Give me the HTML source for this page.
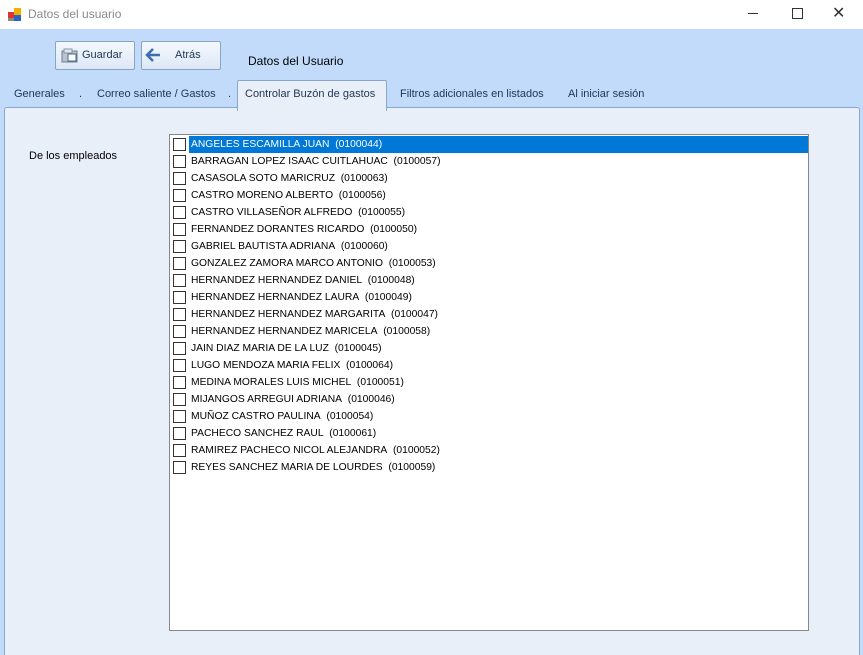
<!DOCTYPE html>
<html style="overflow:hidden"><head><meta charset="utf-8"><style>
html,body{overflow:hidden}
body{margin:0;width:863px;height:655px;overflow:hidden;background:#c2dbfb;font-family:"Liberation Sans",sans-serif;font-size:11px;position:relative}
.tb{position:absolute;left:0;top:0;width:863px;height:29px;background:#fff}
.tb .t{position:absolute;left:28px;top:7px;font-size:12px;color:#8a8a8a}
.btn{position:absolute;top:41px;height:27px;border:1px solid #8aa3c2;border-radius:2px;background:linear-gradient(#f4f8fd,#dde8f6);color:#1f3552}
.abs{position:absolute}
.panel{position:absolute;left:4px;top:107px;width:854px;height:548px;background:#e9eff9;border:1px solid #8aa7cc;border-bottom:none;border-radius:3px 3px 0 0}
.tab{position:absolute;top:88px;color:#1f3552}
.list{position:absolute;left:169px;top:134px;width:638px;height:495px;background:#fff;border:1px solid #828790;font-size:10.3px}
.row{position:absolute;left:3px;height:17px;line-height:17px;width:635px;color:#000}
.cb{position:absolute;left:0;top:2px;width:11px;height:11px;border:1px solid #333;background:#fff}
.row span{position:absolute;left:16px;padding-left:2px;right:0}
.sel span{background:#0078d7;color:#fff}
</style></head><body>
<div class="tb">
<svg class="abs" style="left:8px;top:8px" width="14" height="14"><rect x="0" y="4" width="6" height="6" fill="#d33"/><rect x="6" y="0" width="7" height="7" fill="#f0b000"/><rect x="6" y="7" width="7" height="6" fill="#2a62c8"/><rect x="0" y="10" width="6" height="3" fill="#888"/></svg>
<div class="t">Datos del usuario</div>
<div class="abs" style="left:748px;top:13px;width:10px;height:1px;background:#333"></div>
<div class="abs" style="left:792px;top:8px;width:9px;height:9px;border:1px solid #333"></div>
<div class="abs" style="left:832px;top:3px;font-size:16px;color:#333">✕</div>
</div>
<div class="btn" style="left:55px;width:78px"><svg class="abs" style="left:5px;top:6px" width="18" height="16"><rect x="1" y="3" width="15" height="11" fill="#b9c4d2" stroke="#6f7d90"/><rect x="7" y="6" width="8" height="7" fill="#fff" stroke="#4a6a90"/><rect x="3" y="1" width="8" height="4" fill="#dfe6ef" stroke="#8a96a6"/></svg><span class="abs" style="left:26px;top:7px">Guardar</span></div>
<div class="btn" style="left:141px;width:78px"><svg class="abs" style="left:2px;top:5px" width="18" height="16"><path d="M16 8H4M9 2L3 8l6 6" stroke="#3b6fb0" stroke-width="2.5" fill="none"/></svg><span class="abs" style="left:33px;top:7px">Atrás</span></div>
<div class="abs" style="left:248px;top:54px;font-size:12px;color:#000">Datos del Usuario</div>
<div class="panel"></div>
<div class="abs" style="left:237px;top:80px;width:148px;height:30px;background:#e9eff9;border:1px solid #8aa7cc;border-bottom:none;border-radius:2px 2px 0 0"></div>
<div class="tab" style="left:14px">Generales</div>
<div class="tab" style="left:79px">.</div>
<div class="tab" style="left:97px">Correo saliente / Gastos</div>
<div class="tab" style="left:228px">.</div>
<div class="tab" style="left:245px">Controlar Buzón de gastos</div>
<div class="tab" style="left:400px">Filtros adicionales en listados</div>
<div class="tab" style="left:568px">Al iniciar sesión</div>
<div class="abs" style="left:29px;top:150px;color:#000">De los empleados</div>
<div class="list">
<div class="row sel" style="top:1px"><div class="cb"></div><span>ANGELES ESCAMILLA JUAN&nbsp; (0100044)</span></div>
<div class="row" style="top:18px"><div class="cb"></div><span>BARRAGAN LOPEZ ISAAC CUITLAHUAC&nbsp; (0100057)</span></div>
<div class="row" style="top:35px"><div class="cb"></div><span>CASASOLA SOTO MARICRUZ&nbsp; (0100063)</span></div>
<div class="row" style="top:52px"><div class="cb"></div><span>CASTRO MORENO ALBERTO&nbsp; (0100056)</span></div>
<div class="row" style="top:69px"><div class="cb"></div><span>CASTRO VILLASEÑOR ALFREDO&nbsp; (0100055)</span></div>
<div class="row" style="top:86px"><div class="cb"></div><span>FERNANDEZ DORANTES RICARDO&nbsp; (0100050)</span></div>
<div class="row" style="top:103px"><div class="cb"></div><span>GABRIEL BAUTISTA ADRIANA&nbsp; (0100060)</span></div>
<div class="row" style="top:120px"><div class="cb"></div><span>GONZALEZ ZAMORA MARCO ANTONIO&nbsp; (0100053)</span></div>
<div class="row" style="top:137px"><div class="cb"></div><span>HERNANDEZ HERNANDEZ DANIEL&nbsp; (0100048)</span></div>
<div class="row" style="top:154px"><div class="cb"></div><span>HERNANDEZ HERNANDEZ LAURA&nbsp; (0100049)</span></div>
<div class="row" style="top:171px"><div class="cb"></div><span>HERNANDEZ HERNANDEZ MARGARITA&nbsp; (0100047)</span></div>
<div class="row" style="top:188px"><div class="cb"></div><span>HERNANDEZ HERNANDEZ MARICELA&nbsp; (0100058)</span></div>
<div class="row" style="top:205px"><div class="cb"></div><span>JAIN DIAZ MARIA DE LA LUZ&nbsp; (0100045)</span></div>
<div class="row" style="top:222px"><div class="cb"></div><span>LUGO MENDOZA MARIA FELIX&nbsp; (0100064)</span></div>
<div class="row" style="top:239px"><div class="cb"></div><span>MEDINA MORALES LUIS MICHEL&nbsp; (0100051)</span></div>
<div class="row" style="top:256px"><div class="cb"></div><span>MIJANGOS ARREGUI ADRIANA&nbsp; (0100046)</span></div>
<div class="row" style="top:273px"><div class="cb"></div><span>MUÑOZ CASTRO PAULINA&nbsp; (0100054)</span></div>
<div class="row" style="top:290px"><div class="cb"></div><span>PACHECO SANCHEZ RAUL&nbsp; (0100061)</span></div>
<div class="row" style="top:307px"><div class="cb"></div><span>RAMIREZ PACHECO NICOL ALEJANDRA&nbsp; (0100052)</span></div>
<div class="row" style="top:324px"><div class="cb"></div><span>REYES SANCHEZ MARIA DE LOURDES&nbsp; (0100059)</span></div>
</div>
</body></html>
